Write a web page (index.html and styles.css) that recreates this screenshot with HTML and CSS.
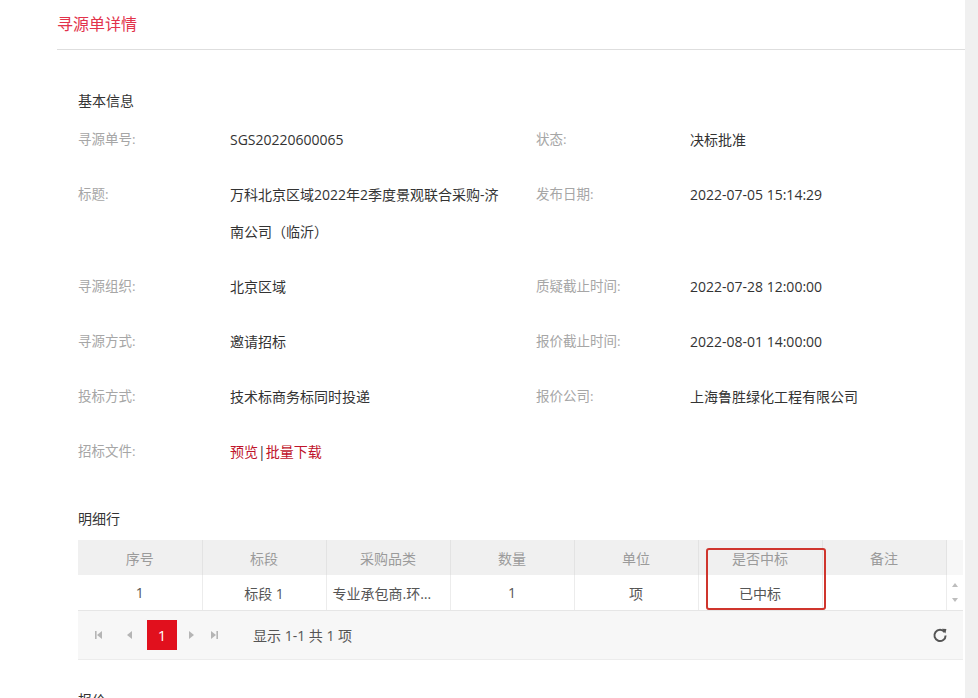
FILE: index.html
```html
<!DOCTYPE html>
<html lang="zh-CN">
<head>
  <meta charset="UTF-8" />
  <meta name="viewport" content="width=device-width, initial-scale=1.0"/>
  <title>寻源单详情</title>
  <link rel="stylesheet" href="styles.css">
</head>
<body>
  <div class="page">
    <main class="detail">
      <h1 class="detail-title">寻源单详情</h1>

      <div class="detail-body">
        <h2 class="section-title">基本信息</h2>
        <dl class="info-grid">
          <dt>寻源单号:</dt><dd>SGS20220600065</dd>
          <dt>状态:</dt><dd>决标批准</dd>

          <dt>标题:</dt><dd>万科北京区域2022年2季度景观联合采购-济南公司（临沂）</dd>
          <dt>发布日期:</dt><dd>2022-07-05 15:14:29</dd>

          <dt>寻源组织:</dt><dd>北京区域</dd>
          <dt>质疑截止时间:</dt><dd>2022-07-28 12:00:00</dd>

          <dt>寻源方式:</dt><dd>邀请招标</dd>
          <dt>报价截止时间:</dt><dd>2022-08-01 14:00:00</dd>

          <dt>投标方式:</dt><dd>技术标商务标同时投递</dd>
          <dt>报价公司:</dt><dd>上海鲁胜绿化工程有限公司</dd>

          <dt>招标文件:</dt><dd class="file-links"><a href="#">预览</a>|<a href="#">批量下载</a></dd>
        </dl>

        <h2 class="section-title">明细行</h2>
        <div class="grid-wrap">
          <table class="grid">
            <colgroup>
              <col class="c-data"><col class="c-data"><col class="c-data"><col class="c-data">
              <col class="c-data"><col class="c-data"><col class="c-data"><col class="c-gutter">
            </colgroup>
            <thead>
              <tr>
                <th>序号</th><th>标段</th><th>采购品类</th><th>数量</th>
                <th>单位</th><th>是否中标</th><th>备注</th><th class="gutter"></th>
              </tr>
            </thead>
            <tbody>
              <tr>
                <td>1</td><td>标段 1</td><td class="ellipsis">专业承包商.环境景观</td><td>1</td>
                <td>项</td><td>已中标</td><td></td>
                <td class="gutter">
                  <span class="scroll-up"></span>
                  <span class="scroll-down"></span>
                </td>
              </tr>
            </tbody>
          </table>

          <div class="pager">
            <span class="pg-btn pg-first">
              <svg width="8" height="8" viewBox="0 0 8 8"><rect x="0" y="0" width="1.6" height="8" fill="#b5b5b5"/><path d="M7 0 L2 4 L7 8 Z" fill="#b5b5b5"/></svg>
            </span>
            <span class="pg-btn pg-prev">
              <svg width="6" height="8" viewBox="0 0 6 8"><path d="M5 0 L0 4 L5 8 Z" fill="#b5b5b5"/></svg>
            </span>
            <span class="pg-current">1</span>
            <span class="pg-btn pg-next">
              <svg width="6" height="8" viewBox="0 0 6 8"><path d="M1 0 L6 4 L1 8 Z" fill="#b5b5b5"/></svg>
            </span>
            <span class="pg-btn pg-last">
              <svg width="8" height="8" viewBox="0 0 8 8"><path d="M1 0 L6 4 L1 8 Z" fill="#b5b5b5"/><rect x="6.4" y="0" width="1.6" height="8" fill="#b5b5b5"/></svg>
            </span>
            <span class="pg-info">显示 1-1 共 1 项</span>
            <span class="pg-refresh">
              <svg width="16" height="16" viewBox="0 0 16 16">
                <path d="M12.6 5.2 A5.6 5.6 0 1 0 13.6 8.4" fill="none" stroke="#555" stroke-width="2"/>
                <path d="M10 1.8 L14.4 2 L13.4 6.4 Z" fill="#555"/>
              </svg>
            </span>
          </div>

          <!-- highlight drawn over the 是否中标 column -->
          <div class="mark"></div>
        </div>

        <h2 class="section-title">报价</h2>
      </div>
    </main>
    <div class="side-strip"></div>
  </div>
</body>
</html>
```

FILE: styles.css
```css
html {
  overflow: hidden;
}

body {
  margin: 0;
  padding: 0;
  background-color: #fff;
  font-family: "Open Sans", "Noto Sans CJK SC", sans-serif;
  font-size: 14px;
  color: #333;
}

.page {
  display: flex;
  min-height: 698px;
}

.detail {
  flex: 1;
  margin-left: 57px;
}

.side-strip {
  width: 13px;
  background: #f0f0f0;
}

.detail-title {
  margin: 0;
  height: 49px;
  line-height: 49px;
  font-size: 16px;
  font-weight: normal;
  color: #e2334b;
  border-bottom: 1px solid #dedede;
}

.detail-body {
  padding-left: 21px;
}

.section-title {
  margin: 0;
  font-size: 14px;
  font-weight: normal;
  line-height: 20px;
  color: #333;
}

.detail-body > .section-title:first-child {
  margin-top: 41px;
  margin-bottom: 1px;
}

.info-grid {
  display: grid;
  grid-template-columns: 152px 306px 154px 1fr;
  margin: 0 0 30px;
}

.info-grid dt,
.info-grid dd {
  margin: 0;
  padding: 9px 0;
  line-height: 37px;
}

.info-grid dt {
  color: #a6a6a6;
  font-size: 13.5px;
}

.info-grid dd {
  color: #333;
  padding-right: 24px;
}

.file-links {
  color: #c0142b;
}

.file-links a {
  color: #c0142b;
  text-decoration: none;
}

.info-grid + .section-title {
  margin-bottom: 11px;
}

.grid-wrap {
  position: relative;
  width: 885px;
  margin-bottom: 30px;
}

.grid {
  width: 100%;
  table-layout: fixed;
  border-collapse: collapse;
}

.c-data {
  width: 124px;
}

.c-gutter {
  width: 17px;
}

.grid th,
.grid td {
  height: 35px;
  padding: 0 6px;
  text-align: center;
  font-weight: normal;
  white-space: nowrap;
  overflow: hidden;
  text-overflow: ellipsis;
}

.grid th {
  background: #f0f0f0;
  color: #9b9b9b;
  border-right: 1px solid #e3e3e3;
}

.grid td {
  background: #fff;
  color: #555;
  border-right: 1px solid #ececec;
  border-bottom: 1px solid #e6e6e6;
}

.grid th.gutter {
  background: #f7f7f7;
  border-right: none;
}

.grid td.gutter {
  position: relative;
  padding: 0;
  border-right: none;
}

.scroll-up,
.scroll-down {
  position: absolute;
  left: 5px;
  width: 0;
  height: 0;
  border-left: 3px solid transparent;
  border-right: 3px solid transparent;
}

.scroll-up {
  top: 8px;
  border-bottom: 4px solid #bdbdbd;
}

.scroll-down {
  bottom: 8px;
  border-top: 4px solid #bdbdbd;
}

.pager {
  display: flex;
  align-items: center;
  height: 48px;
  padding-left: 10px;
  background: #f7f7f7;
  border-bottom: 1px solid #ececec;
  color: #555;
}

.pg-btn {
  display: flex;
  align-items: center;
  justify-content: center;
  width: 22px;
  height: 30px;
}

.pg-prev {
  margin-left: 9px;
}

.pg-current {
  width: 30px;
  height: 30px;
  margin-left: 6px;
  line-height: 30px;
  text-align: center;
  background: #e1101d;
  color: #fff;
  font-size: 15px;
}

.pg-next {
  margin-left: 3px;
}

.pg-last {
  margin-left: 1px;
}

.pg-info {
  margin-left: 28px;
  color: #555;
}

.pg-refresh {
  display: flex;
  margin-left: auto;
  margin-right: 15px;
}

.mark {
  position: absolute;
  left: 628px;
  top: 8px;
  width: 116px;
  height: 58px;
  border: 2px solid #cf352d;
  border-radius: 3px;
}
```
